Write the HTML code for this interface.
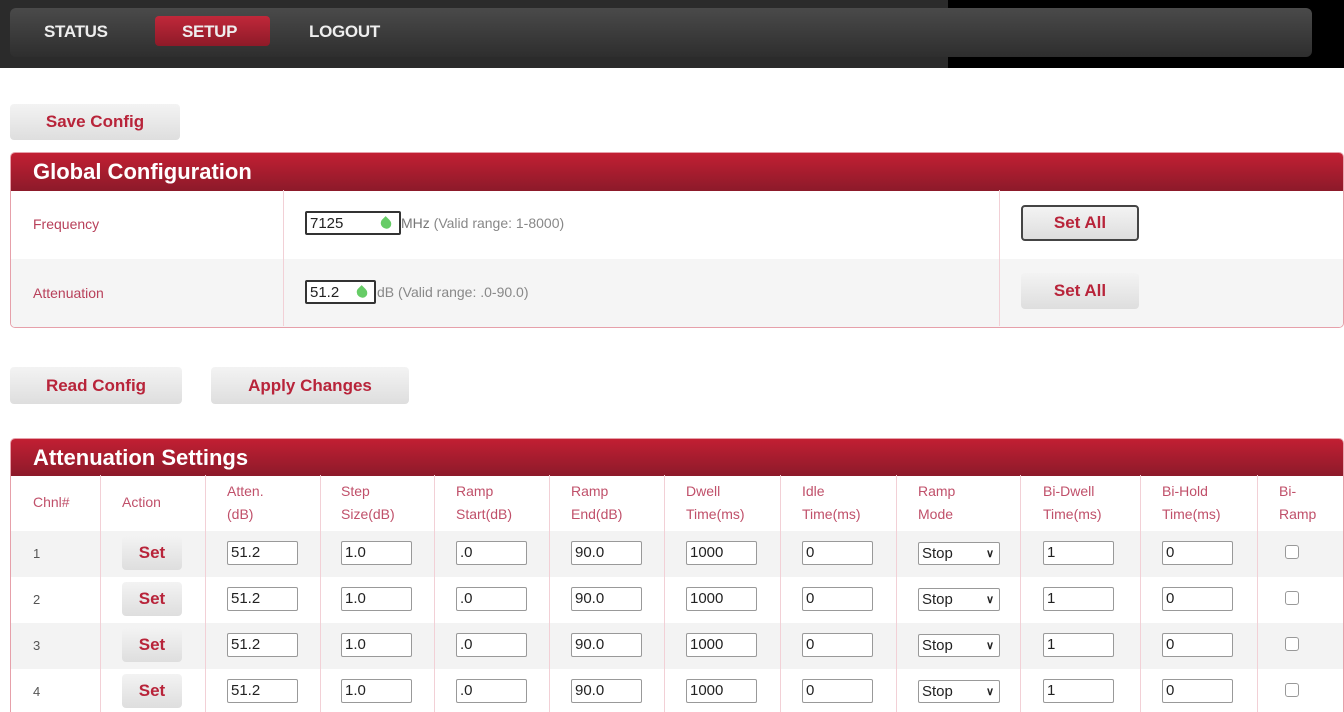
<!DOCTYPE html>
<html><head><meta charset="utf-8"><style>
*{box-sizing:border-box;margin:0;padding:0}
html,body{width:1344px;height:712px;overflow:hidden}
body{background:#fff;font-family:"Liberation Sans",sans-serif;position:relative}
.a{position:absolute}
.hdr{left:0;top:0;width:1344px;height:68px;background:linear-gradient(90deg,#2b2b2b 0,#2b2b2b 948px,#000 948px)}
.bar{left:10px;top:8px;width:1302px;height:49px;border-radius:6px;background:linear-gradient(#4a4a4a,#2e2e2e)}
.nav{top:22px;color:#eee;font-weight:bold;font-size:17px;letter-spacing:-0.3px}
.setup{left:155px;top:16px;width:115px;height:30px;border-radius:4px;background:linear-gradient(#c0283a,#8e1a28)}
.btn{background:linear-gradient(#f3f3f3,#dedede);border-radius:4px;color:#b8243a;font-weight:bold;font-size:17px;text-align:center}
.panel{border:1px solid #e6a0aa;border-radius:5px;overflow:hidden}
.ph{background:linear-gradient(#c21f33,#8c1a2a);color:#fff;font-weight:bold;font-size:22px;padding-left:22px}
.lbl{color:#b8405a;font-size:14px}
.inp{border:1px solid #999;background:#fff;font-size:15px;color:#222;padding-left:3px;height:24px;line-height:22px;width:71px;border-radius:2px}
.vl{width:1px;background:#f2d0d6}
.th{color:#c0506a;font-size:14px;line-height:23px}
.cb{width:14px;height:14px;border:1px solid #999;border-radius:3px;background:#fff}
.leaf{position:absolute;top:5px;width:10px;height:11px;background:#6c6;border-radius:50% 0 50% 50%;transform:rotate(-45deg)}
</style></head><body>
<div class="a hdr"></div>
<div class="a bar"></div>
<div class="a setup"></div>
<div class="a nav" style="left:44px">STATUS</div>
<div class="a nav" style="left:182px">SETUP</div>
<div class="a nav" style="left:309px">LOGOUT</div>

<div class="a btn" style="left:10px;top:104px;width:170px;height:36px;line-height:36px">Save Config</div>

<div class="a panel" style="left:10px;top:152px;width:1334px;height:176px">
<div class="ph" style="height:38px;line-height:38px">Global Configuration</div>
<div style="height:68px;background:#fff"></div>
<div style="height:70px;background:#f5f5f5"></div>
</div>
<div class="a vl" style="left:283px;top:190px;height:136px"></div>
<div class="a vl" style="left:999px;top:190px;height:136px"></div>
<div class="a lbl" style="left:33px;top:216px">Frequency</div>
<div class="a lbl" style="left:33px;top:285px">Attenuation</div>
<div class="a inp" style="left:305px;top:211px;width:96px;border:2px solid #333">7125<span class="leaf" style="left:74px"></span></div>
<div class="a" style="left:401px;top:215px;font-size:14px;color:#888"><span style="color:#777">MHz</span> (Valid range: 1-8000)</div>
<div class="a inp" style="left:305px;top:280px;width:71px;border:2px solid #333">51.2<span class="leaf" style="left:50px"></span></div>
<div class="a" style="left:377px;top:284px;font-size:14px;color:#888">dB (Valid range: .0-90.0)</div>
<div class="a btn" style="left:1021px;top:205px;width:118px;height:36px;line-height:32px;border:2px solid #444">Set All</div>
<div class="a btn" style="left:1021px;top:273px;width:118px;height:36px;line-height:36px">Set All</div>

<div class="a btn" style="left:10px;top:367px;width:172px;height:37px;line-height:37px">Read Config</div>
<div class="a btn" style="left:211px;top:367px;width:198px;height:37px;line-height:37px">Apply Changes</div>

<div class="a panel" style="left:10px;top:438px;width:1334px;height:274px;border-bottom:none;border-radius:5px 5px 0 0">
<div class="ph" style="height:37px;line-height:38px">Attenuation Settings</div>
<div style="height:55px;background:#fff"></div>
<div style="height:46px;background:#f3f3f3"></div>
<div style="height:46px;background:#fff"></div>
<div style="height:46px;background:#f3f3f3"></div>
<div style="height:46px;background:#fff"></div>
</div>
<div class="a vl" style="left:100px;top:475px;height:237px"></div>
<div class="a vl" style="left:205px;top:475px;height:237px"></div>
<div class="a vl" style="left:320px;top:475px;height:237px"></div>
<div class="a vl" style="left:434px;top:475px;height:237px"></div>
<div class="a vl" style="left:549px;top:475px;height:237px"></div>
<div class="a vl" style="left:664px;top:475px;height:237px"></div>
<div class="a vl" style="left:780px;top:475px;height:237px"></div>
<div class="a vl" style="left:896px;top:475px;height:237px"></div>
<div class="a vl" style="left:1020px;top:475px;height:237px"></div>
<div class="a vl" style="left:1140px;top:475px;height:237px"></div>
<div class="a vl" style="left:1257px;top:475px;height:237px"></div>

<div class="a th" style="left:33px;top:491px">Chnl#</div>
<div class="a th" style="left:122px;top:491px">Action</div>
<div class="a th" style="left:227px;top:480px">Atten.<br>(dB)</div>
<div class="a th" style="left:341px;top:480px">Step<br>Size(dB)</div>
<div class="a th" style="left:456px;top:480px">Ramp<br>Start(dB)</div>
<div class="a th" style="left:571px;top:480px">Ramp<br>End(dB)</div>
<div class="a th" style="left:686px;top:480px">Dwell<br>Time(ms)</div>
<div class="a th" style="left:802px;top:480px">Idle<br>Time(ms)</div>
<div class="a th" style="left:918px;top:480px">Ramp<br>Mode</div>
<div class="a th" style="left:1043px;top:480px">Bi-Dwell<br>Time(ms)</div>
<div class="a th" style="left:1162px;top:480px">Bi-Hold<br>Time(ms)</div>
<div class="a th" style="left:1279px;top:480px">Bi-<br>Ramp</div>

<div id="rows"></div>
<script>
var h='';
for(var i=0;i<4;i++){var t=541+i*46;
h+='<div class="a" style="left:33px;top:'+(t+5)+'px;font-size:13px;color:#555">'+(i+1)+'</div>';
h+='<div class="a btn" style="left:122px;top:'+(t-5)+'px;width:60px;height:34px;line-height:34px">Set</div>';
var v=[['51.2',227],['1.0',341],['.0',456],['90.0',571],['1000',686],['0',802],['1',1043],['0',1162]];
v.forEach(function(x){h+='<div class="a inp" style="left:'+x[1]+'px;top:'+t+'px">'+x[0]+'</div>';});
h+='<div class="a inp" style="left:918px;top:'+(t+1)+'px;width:82px;height:23px">Stop<span style="position:absolute;right:5px;font-size:11px;font-weight:bold">&#8744;</span></div>';
h+='<div class="a cb" style="left:1285px;top:'+(t+4)+'px"></div>';}
document.getElementById('rows').innerHTML=h;
</script>
</body></html>
